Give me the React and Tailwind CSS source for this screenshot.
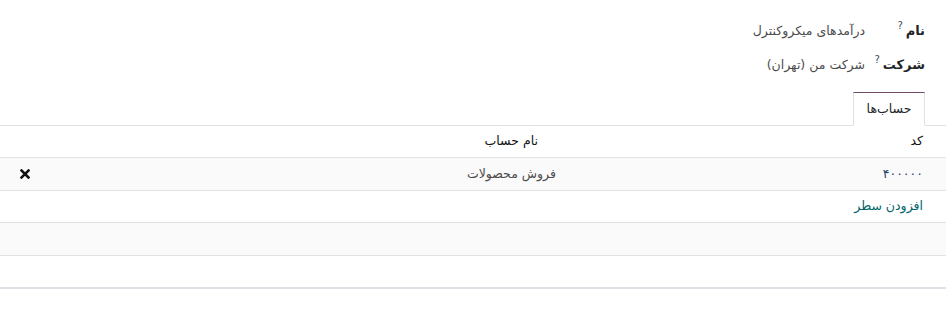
export default function App() {
  return (
    <div
      dir="rtl"
      className="w-[946px] h-[328px] bg-white text-[13px] text-[#212529]"
      style={{ fontFamily: '"DejaVu Sans", "Noto Sans", sans-serif' }}
    >
      <div className="pr-[21px] pt-[18px]">
        <div className="flex items-center h-[26px]">
          <div className="w-[60px] flex items-center">
            <span className="font-bold text-[#212529]">نام</span>
            <span className="text-[10px] leading-none text-[#3a4a5a] mr-[3px] -mt-[10px]">?</span>
          </div>
          <span className="text-[12.5px] text-[#4c4c4c]">درآمدهای میکروکنترل</span>
        </div>
        <div className="flex items-center h-[26px] mt-[8px]">
          <div className="w-[60px] flex items-center">
            <span className="font-bold text-[#212529]">شرکت</span>
            <span className="text-[10px] leading-none text-[#3a4a5a] mr-[3px] -mt-[10px]">?</span>
          </div>
          <span className="text-[12.5px] text-[#4c4c4c]">شرکت من (تهران)</span>
        </div>
      </div>

      <div className="mt-[14px] border-b border-[#dee2e6] flex pr-[21px]">
        <div className="w-[72px] h-[34px] -mb-px bg-white border border-b-white border-[#dee2e6] border-t-[#714B67] flex items-center justify-center text-[12.5px] text-[#212529]">
          حساب‌ها
        </div>
      </div>

      <div className="text-[12.5px]">
        <div className="flex h-[32px] items-center border-b border-[#e2e2e2] text-[#111]">
          <div className="w-[386px] pr-[23px]">کد</div>
          <div className="flex-1 pr-[22px]">نام حساب</div>
        </div>
        <div className="flex h-[33px] items-center border-b border-[#e2e2e2] bg-[#fafafa]">
          <div className="w-[386px] pr-[23px] text-[#2a3f6b]">۴۰۰۰۰۰</div>
          <div className="flex-1 pr-[4px] text-[#4c4c4c]">فروش محصولات</div>
          <div className="w-[50px] flex justify-center">
            <svg width="10" height="10" viewBox="0 0 10 10">
              <path d="M1.5 1.5 L8.5 8.5 M8.5 1.5 L1.5 8.5" stroke="#111" strokeWidth="2.5" strokeLinecap="square" />
            </svg>
          </div>
        </div>
        <div className="flex h-[32px] items-center border-b border-[#e2e2e2]">
          <div className="pr-[23px] text-[#01666b]">افزودن سطر</div>
        </div>
        <div className="h-[33px] border-b border-[#e2e2e2] bg-[#fafafa]" />
        <div className="h-[33px] border-b-2 border-[#e0e0e6]" />
      </div>
    </div>
  );
}
